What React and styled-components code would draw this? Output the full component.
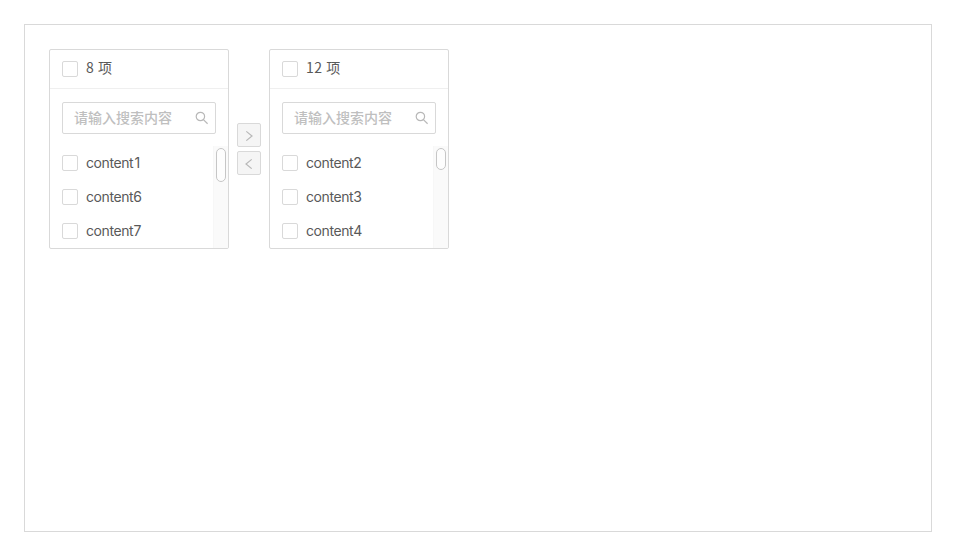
import React from 'react';
import styled, { createGlobalStyle } from 'styled-components';

const GlobalStyle = createGlobalStyle`
  * { box-sizing: border-box; }
  body {
    margin: 0;
    background: #fff;
    color: #595959;
    font: 14px/22px Inter, "Noto Sans CJK SC", sans-serif;
    overflow: hidden;
  }
`;

const Page = styled.main`
  height: 556px;
  padding: 24px;
`;

const Frame = styled.section`
  height: 508px;
  width: 908px;
  padding: 24px;
  border: 1px solid #d9d9d9;
`;

const Transfer = styled.div`
  display: flex;
  align-items: center;
  gap: 8px;
`;

const Panel = styled.div`
  display: flex;
  flex-direction: column;
  width: 180px;
  height: 200px;
  border: 1px solid #d9d9d9;
  border-radius: 2px;
  overflow: hidden;
`;

const Header = styled.header`
  display: flex;
  align-items: center;
  gap: 8px;
  height: 39px;
  padding: 0 12px;
  border-bottom: 1px solid #efefef;
`;

const Count = styled.span`
  padding-bottom: 4px;
  font-family: "Noto Sans CJK SC", sans-serif;
  letter-spacing: 0.5px;
`;

const Checkbox = styled.span`
  flex: none;
  width: 16px;
  height: 16px;
  border: 1px solid #d9d9d9;
  border-radius: 2px;
`;

const SearchBox = styled.div`
  display: flex;
  align-items: center;
  justify-content: space-between;
  flex: none;
  height: 32px;
  margin: 13px 12px 12px;
  padding: 0 6px 0 11px;
  border: 1px solid #d9d9d9;
  border-radius: 2px;
  color: #bfbfbf;
  font-weight: 500;
`;

const Body = styled.div`
  display: flex;
  flex: 1;
  min-height: 0;
`;

const List = styled.div`
  flex: 1;
  overflow: hidden;
`;

const Row = styled.div`
  display: flex;
  align-items: center;
  gap: 8px;
  height: 34px;
  padding-left: 12px;
`;

const Label = styled.span`
  letter-spacing: -0.42px;
`;

const Digit = styled.span`
  display: inline-block;
  width: 8px;
  text-align: center;
`;

const Track = styled.div`
  width: 15px;
  padding: 2px 2px 0;
  background: #fafafa;
  border-left: 1px solid #f7f7f7;
`;

const Thumb = styled.div`
  width: 10px;
  height: ${(p) => p.$height}px;
  border: 1px solid #c6c6c6;
  border-radius: 5px;
  background: #fdfdfd;
`;

const Operations = styled.div`
  display: flex;
  flex-direction: column;
  gap: 4px;
`;

const MoveButton = styled.button`
  display: flex;
  align-items: center;
  justify-content: center;
  width: 24px;
  height: 24px;
  padding: 0;
  border: 1px solid #d9d9d9;
  border-radius: 2px;
  background: #f5f5f5;
  color: #b8b8b8;
`;

const Icon = styled.svg`
  display: block;
  fill: none;
  stroke: currentColor;
  stroke-width: 1.2;
`;

const SearchGlyph = styled(Icon)`
  color: #b8b8b8;
`;

const SearchIcon = () => (
  <SearchGlyph width="14" height="14" viewBox="0 0 14 14">
    <circle cx="5.4" cy="5.5" r="4.2" />
    <path d="M8.4 8.6 12.6 12.7" />
  </SearchGlyph>
);

const Chevron = ({ d }) => (
  <Icon width="12" height="12" viewBox="0 0 12 12">
    <path d={d} />
  </Icon>
);

const TransferPanel = ({ count, items, thumb }) => (
  <Panel>
    <Header>
      <Checkbox />
      <Count>{count} 项</Count>
    </Header>
    <SearchBox>
      请输入搜索内容
      <SearchIcon />
    </SearchBox>
    <Body>
      <List>
        {items.map((n) => (
          <Row key={n}>
            <Checkbox />
            <Label>content<Digit>{n}</Digit></Label>
          </Row>
        ))}
      </List>
      <Track>
        <Thumb $height={thumb} />
      </Track>
    </Body>
  </Panel>
);

export default function App() {
  return (
    <Page>
      <GlobalStyle />
      <Frame>
        <Transfer>
          <TransferPanel count={8} items={[1, 6, 7]} thumb={34} />
          <Operations>
            <MoveButton aria-label="Move right">
              <Chevron d="M3.3 2.4 9 7 3.3 11.6" />
            </MoveButton>
            <MoveButton aria-label="Move left">
              <Chevron d="M8.7 2.4 3 7 8.7 11.6" />
            </MoveButton>
          </Operations>
          <TransferPanel count={12} items={[2, 3, 4]} thumb={22} />
        </Transfer>
      </Frame>
    </Page>
  );
}
